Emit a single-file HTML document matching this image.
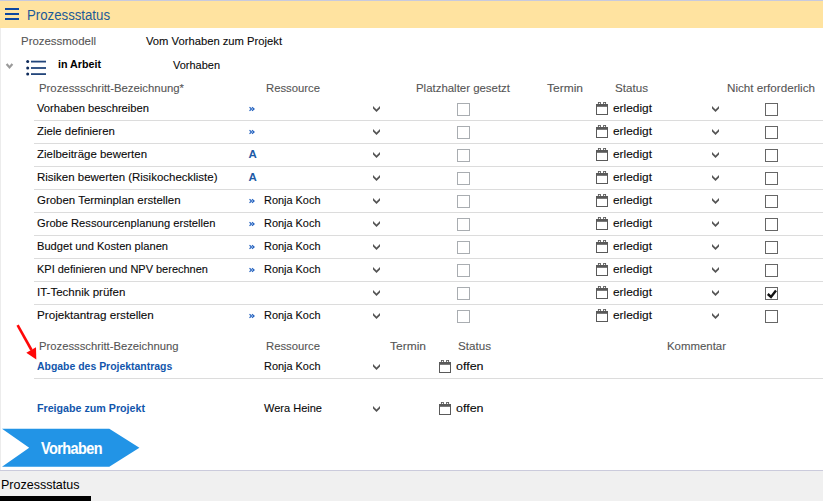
<!DOCTYPE html>
<html><head><meta charset="utf-8"><style>
*{margin:0;padding:0;box-sizing:border-box}
html,body{width:823px;height:501px;overflow:hidden;background:#fff;font-family:"Liberation Sans", sans-serif}
.t{position:absolute;white-space:nowrap;-webkit-text-stroke:0.1px currentColor}
.hl{position:absolute;left:34px;width:789px;height:1px;background:#dcdcdc}
.chev{position:absolute}
.cal{position:absolute}
.cb1{position:absolute;width:13px;height:13px;border:1px solid #a9adb1;background:#fff}
.cb2{position:absolute;width:13px;height:13px;border:1px solid #666;background:#fff}
.dq{position:absolute;font-size:11px;line-height:8px;font-weight:700;color:#1d5aa6}
</style></head><body>
<svg width="0" height="0" style="position:absolute"><defs>
<g id="calicon"><rect x="0.5" y="2.5" width="11" height="10" fill="none" stroke="#5a5a5a" stroke-width="1"/><rect x="0" y="2" width="12" height="2.8" fill="#5a5a5a"/><rect x="2.4" y="0.4" width="2" height="2.2" fill="none" stroke="#5a5a5a" stroke-width="0.9"/><rect x="7.6" y="0.4" width="2" height="2.2" fill="none" stroke="#5a5a5a" stroke-width="0.9"/></g>
</defs></svg>
<div style="position:absolute;left:0;top:0;width:823px;height:1px;background:#c8cade"></div>
<div style="position:absolute;left:0;top:1px;width:823px;height:27px;background:#ffe3a0"></div>
<div style="position:absolute;left:0;top:28px;width:1px;height:442px;background:#ececec"></div>
<div style="position:absolute;left:5px;top:8px;width:14px;height:2px;background:#0d47a1"></div>
<div style="position:absolute;left:5px;top:13px;width:14px;height:2px;background:#0d47a1"></div>
<div style="position:absolute;left:5px;top:18px;width:14px;height:2px;background:#0d47a1"></div>
<svg style="position:absolute;left:0px;top:54px" width="50" height="26">
<path d="M6.6 10 L9.5 13.4 L12.4 10" fill="none" stroke="#9a9a9a" stroke-width="2.2"/>
<circle cx="27.7" cy="7.6" r="1.5" fill="#0e2a5a"/><circle cx="27.7" cy="14" r="1.5" fill="#0e2a5a"/><circle cx="27.7" cy="20.1" r="1.5" fill="#0e2a5a"/>
<rect x="31" y="6.7" width="15" height="1.8" fill="#22457a"/><rect x="31" y="13.1" width="15" height="1.8" fill="#22457a"/><rect x="31" y="19.2" width="15" height="1.8" fill="#22457a"/>
</svg>
<svg style="position:absolute;left:249px;top:106px" width="6" height="6"><path d="M0.5 1.2 L2.6 3 L0.5 4.8 M3 1.2 L5.1 3 L3 4.8" fill="none" stroke="#2563c0" stroke-width="1.15"/></svg><svg class="chev" style="left:372px;top:105px" width="9" height="8"><path d="M1 1 L1 3.5 L4.5 7 L8 3.5 L8 1 L4.5 4.5 Z" fill="#555"/></svg><svg class="chev" style="left:711px;top:105px" width="9" height="8"><path d="M1 1 L1 3.5 L4.5 7 L8 3.5 L8 1 L4.5 4.5 Z" fill="#555"/></svg><div class="cb1" style="left:457px;top:103px"></div><div class="cb2" style="left:765px;top:103px"></div><svg class="cal" style="left:596px;top:102px" width="12" height="13"><rect x="0.5" y="2.5" width="11" height="10" fill="none" stroke="#5a5a5a" stroke-width="1"/><rect x="0" y="2" width="12" height="2.8" fill="#5a5a5a"/><rect x="2.4" y="0.4" width="2" height="2.2" fill="none" stroke="#5a5a5a" stroke-width="0.9"/><rect x="7.6" y="0.4" width="2" height="2.2" fill="none" stroke="#5a5a5a" stroke-width="0.9"/></svg><div class="hl" style="top:120px"></div><svg style="position:absolute;left:249px;top:129px" width="6" height="6"><path d="M0.5 1.2 L2.6 3 L0.5 4.8 M3 1.2 L5.1 3 L3 4.8" fill="none" stroke="#2563c0" stroke-width="1.15"/></svg><svg class="chev" style="left:372px;top:128px" width="9" height="8"><path d="M1 1 L1 3.5 L4.5 7 L8 3.5 L8 1 L4.5 4.5 Z" fill="#555"/></svg><svg class="chev" style="left:711px;top:128px" width="9" height="8"><path d="M1 1 L1 3.5 L4.5 7 L8 3.5 L8 1 L4.5 4.5 Z" fill="#555"/></svg><div class="cb1" style="left:457px;top:126px"></div><div class="cb2" style="left:765px;top:126px"></div><svg class="cal" style="left:596px;top:125px" width="12" height="13"><rect x="0.5" y="2.5" width="11" height="10" fill="none" stroke="#5a5a5a" stroke-width="1"/><rect x="0" y="2" width="12" height="2.8" fill="#5a5a5a"/><rect x="2.4" y="0.4" width="2" height="2.2" fill="none" stroke="#5a5a5a" stroke-width="0.9"/><rect x="7.6" y="0.4" width="2" height="2.2" fill="none" stroke="#5a5a5a" stroke-width="0.9"/></svg><div class="hl" style="top:143px"></div><svg class="chev" style="left:372px;top:151px" width="9" height="8"><path d="M1 1 L1 3.5 L4.5 7 L8 3.5 L8 1 L4.5 4.5 Z" fill="#555"/></svg><svg class="chev" style="left:711px;top:151px" width="9" height="8"><path d="M1 1 L1 3.5 L4.5 7 L8 3.5 L8 1 L4.5 4.5 Z" fill="#555"/></svg><div class="cb1" style="left:457px;top:149px"></div><div class="cb2" style="left:765px;top:149px"></div><svg class="cal" style="left:596px;top:148px" width="12" height="13"><rect x="0.5" y="2.5" width="11" height="10" fill="none" stroke="#5a5a5a" stroke-width="1"/><rect x="0" y="2" width="12" height="2.8" fill="#5a5a5a"/><rect x="2.4" y="0.4" width="2" height="2.2" fill="none" stroke="#5a5a5a" stroke-width="0.9"/><rect x="7.6" y="0.4" width="2" height="2.2" fill="none" stroke="#5a5a5a" stroke-width="0.9"/></svg><div class="hl" style="top:166px"></div><svg class="chev" style="left:372px;top:174px" width="9" height="8"><path d="M1 1 L1 3.5 L4.5 7 L8 3.5 L8 1 L4.5 4.5 Z" fill="#555"/></svg><svg class="chev" style="left:711px;top:174px" width="9" height="8"><path d="M1 1 L1 3.5 L4.5 7 L8 3.5 L8 1 L4.5 4.5 Z" fill="#555"/></svg><div class="cb1" style="left:457px;top:172px"></div><div class="cb2" style="left:765px;top:172px"></div><svg class="cal" style="left:596px;top:171px" width="12" height="13"><rect x="0.5" y="2.5" width="11" height="10" fill="none" stroke="#5a5a5a" stroke-width="1"/><rect x="0" y="2" width="12" height="2.8" fill="#5a5a5a"/><rect x="2.4" y="0.4" width="2" height="2.2" fill="none" stroke="#5a5a5a" stroke-width="0.9"/><rect x="7.6" y="0.4" width="2" height="2.2" fill="none" stroke="#5a5a5a" stroke-width="0.9"/></svg><div class="hl" style="top:189px"></div><svg style="position:absolute;left:249px;top:198px" width="6" height="6"><path d="M0.5 1.2 L2.6 3 L0.5 4.8 M3 1.2 L5.1 3 L3 4.8" fill="none" stroke="#2563c0" stroke-width="1.15"/></svg><svg class="chev" style="left:372px;top:197px" width="9" height="8"><path d="M1 1 L1 3.5 L4.5 7 L8 3.5 L8 1 L4.5 4.5 Z" fill="#555"/></svg><svg class="chev" style="left:711px;top:197px" width="9" height="8"><path d="M1 1 L1 3.5 L4.5 7 L8 3.5 L8 1 L4.5 4.5 Z" fill="#555"/></svg><div class="cb1" style="left:457px;top:195px"></div><div class="cb2" style="left:765px;top:195px"></div><svg class="cal" style="left:596px;top:194px" width="12" height="13"><rect x="0.5" y="2.5" width="11" height="10" fill="none" stroke="#5a5a5a" stroke-width="1"/><rect x="0" y="2" width="12" height="2.8" fill="#5a5a5a"/><rect x="2.4" y="0.4" width="2" height="2.2" fill="none" stroke="#5a5a5a" stroke-width="0.9"/><rect x="7.6" y="0.4" width="2" height="2.2" fill="none" stroke="#5a5a5a" stroke-width="0.9"/></svg><div class="hl" style="top:212px"></div><svg style="position:absolute;left:249px;top:221px" width="6" height="6"><path d="M0.5 1.2 L2.6 3 L0.5 4.8 M3 1.2 L5.1 3 L3 4.8" fill="none" stroke="#2563c0" stroke-width="1.15"/></svg><svg class="chev" style="left:372px;top:220px" width="9" height="8"><path d="M1 1 L1 3.5 L4.5 7 L8 3.5 L8 1 L4.5 4.5 Z" fill="#555"/></svg><svg class="chev" style="left:711px;top:220px" width="9" height="8"><path d="M1 1 L1 3.5 L4.5 7 L8 3.5 L8 1 L4.5 4.5 Z" fill="#555"/></svg><div class="cb1" style="left:457px;top:218px"></div><div class="cb2" style="left:765px;top:218px"></div><svg class="cal" style="left:596px;top:217px" width="12" height="13"><rect x="0.5" y="2.5" width="11" height="10" fill="none" stroke="#5a5a5a" stroke-width="1"/><rect x="0" y="2" width="12" height="2.8" fill="#5a5a5a"/><rect x="2.4" y="0.4" width="2" height="2.2" fill="none" stroke="#5a5a5a" stroke-width="0.9"/><rect x="7.6" y="0.4" width="2" height="2.2" fill="none" stroke="#5a5a5a" stroke-width="0.9"/></svg><div class="hl" style="top:235px"></div><svg style="position:absolute;left:249px;top:244px" width="6" height="6"><path d="M0.5 1.2 L2.6 3 L0.5 4.8 M3 1.2 L5.1 3 L3 4.8" fill="none" stroke="#2563c0" stroke-width="1.15"/></svg><svg class="chev" style="left:372px;top:243px" width="9" height="8"><path d="M1 1 L1 3.5 L4.5 7 L8 3.5 L8 1 L4.5 4.5 Z" fill="#555"/></svg><svg class="chev" style="left:711px;top:243px" width="9" height="8"><path d="M1 1 L1 3.5 L4.5 7 L8 3.5 L8 1 L4.5 4.5 Z" fill="#555"/></svg><div class="cb1" style="left:457px;top:241px"></div><div class="cb2" style="left:765px;top:241px"></div><svg class="cal" style="left:596px;top:240px" width="12" height="13"><rect x="0.5" y="2.5" width="11" height="10" fill="none" stroke="#5a5a5a" stroke-width="1"/><rect x="0" y="2" width="12" height="2.8" fill="#5a5a5a"/><rect x="2.4" y="0.4" width="2" height="2.2" fill="none" stroke="#5a5a5a" stroke-width="0.9"/><rect x="7.6" y="0.4" width="2" height="2.2" fill="none" stroke="#5a5a5a" stroke-width="0.9"/></svg><div class="hl" style="top:258px"></div><svg style="position:absolute;left:249px;top:267px" width="6" height="6"><path d="M0.5 1.2 L2.6 3 L0.5 4.8 M3 1.2 L5.1 3 L3 4.8" fill="none" stroke="#2563c0" stroke-width="1.15"/></svg><svg class="chev" style="left:372px;top:266px" width="9" height="8"><path d="M1 1 L1 3.5 L4.5 7 L8 3.5 L8 1 L4.5 4.5 Z" fill="#555"/></svg><svg class="chev" style="left:711px;top:266px" width="9" height="8"><path d="M1 1 L1 3.5 L4.5 7 L8 3.5 L8 1 L4.5 4.5 Z" fill="#555"/></svg><div class="cb1" style="left:457px;top:264px"></div><div class="cb2" style="left:765px;top:264px"></div><svg class="cal" style="left:596px;top:263px" width="12" height="13"><rect x="0.5" y="2.5" width="11" height="10" fill="none" stroke="#5a5a5a" stroke-width="1"/><rect x="0" y="2" width="12" height="2.8" fill="#5a5a5a"/><rect x="2.4" y="0.4" width="2" height="2.2" fill="none" stroke="#5a5a5a" stroke-width="0.9"/><rect x="7.6" y="0.4" width="2" height="2.2" fill="none" stroke="#5a5a5a" stroke-width="0.9"/></svg><div class="hl" style="top:281px"></div><svg class="chev" style="left:372px;top:289px" width="9" height="8"><path d="M1 1 L1 3.5 L4.5 7 L8 3.5 L8 1 L4.5 4.5 Z" fill="#555"/></svg><svg class="chev" style="left:711px;top:289px" width="9" height="8"><path d="M1 1 L1 3.5 L4.5 7 L8 3.5 L8 1 L4.5 4.5 Z" fill="#555"/></svg><div class="cb1" style="left:457px;top:287px"></div><div class="cb2" style="left:765px;top:287px"></div><svg style="position:absolute;left:765px;top:287px" width="13" height="13"><path d="M2.8 7 L6 10 L11 3.5" fill="none" stroke="#111" stroke-width="2.4"/></svg><svg class="cal" style="left:596px;top:286px" width="12" height="13"><rect x="0.5" y="2.5" width="11" height="10" fill="none" stroke="#5a5a5a" stroke-width="1"/><rect x="0" y="2" width="12" height="2.8" fill="#5a5a5a"/><rect x="2.4" y="0.4" width="2" height="2.2" fill="none" stroke="#5a5a5a" stroke-width="0.9"/><rect x="7.6" y="0.4" width="2" height="2.2" fill="none" stroke="#5a5a5a" stroke-width="0.9"/></svg><div class="hl" style="top:304px"></div><svg style="position:absolute;left:249px;top:313px" width="6" height="6"><path d="M0.5 1.2 L2.6 3 L0.5 4.8 M3 1.2 L5.1 3 L3 4.8" fill="none" stroke="#2563c0" stroke-width="1.15"/></svg><svg class="chev" style="left:372px;top:312px" width="9" height="8"><path d="M1 1 L1 3.5 L4.5 7 L8 3.5 L8 1 L4.5 4.5 Z" fill="#555"/></svg><svg class="chev" style="left:711px;top:312px" width="9" height="8"><path d="M1 1 L1 3.5 L4.5 7 L8 3.5 L8 1 L4.5 4.5 Z" fill="#555"/></svg><div class="cb1" style="left:457px;top:310px"></div><div class="cb2" style="left:765px;top:310px"></div><svg class="cal" style="left:596px;top:309px" width="12" height="13"><rect x="0.5" y="2.5" width="11" height="10" fill="none" stroke="#5a5a5a" stroke-width="1"/><rect x="0" y="2" width="12" height="2.8" fill="#5a5a5a"/><rect x="2.4" y="0.4" width="2" height="2.2" fill="none" stroke="#5a5a5a" stroke-width="0.9"/><rect x="7.6" y="0.4" width="2" height="2.2" fill="none" stroke="#5a5a5a" stroke-width="0.9"/></svg><svg class="chev" style="left:372px;top:363px" width="9" height="8"><path d="M1 1 L1 3.5 L4.5 7 L8 3.5 L8 1 L4.5 4.5 Z" fill="#555"/></svg><svg class="cal" style="left:439px;top:360px" width="12" height="13"><rect x="0.5" y="2.5" width="11" height="10" fill="none" stroke="#5a5a5a" stroke-width="1"/><rect x="0" y="2" width="12" height="2.8" fill="#5a5a5a"/><rect x="2.4" y="0.4" width="2" height="2.2" fill="none" stroke="#5a5a5a" stroke-width="0.9"/><rect x="7.6" y="0.4" width="2" height="2.2" fill="none" stroke="#5a5a5a" stroke-width="0.9"/></svg><div class="hl" style="top:378px"></div><svg class="chev" style="left:372px;top:405px" width="9" height="8"><path d="M1 1 L1 3.5 L4.5 7 L8 3.5 L8 1 L4.5 4.5 Z" fill="#555"/></svg><svg class="cal" style="left:439px;top:402px" width="12" height="13"><rect x="0.5" y="2.5" width="11" height="10" fill="none" stroke="#5a5a5a" stroke-width="1"/><rect x="0" y="2" width="12" height="2.8" fill="#5a5a5a"/><rect x="2.4" y="0.4" width="2" height="2.2" fill="none" stroke="#5a5a5a" stroke-width="0.9"/><rect x="7.6" y="0.4" width="2" height="2.2" fill="none" stroke="#5a5a5a" stroke-width="0.9"/></svg>
<svg style="position:absolute;left:0;top:0" width="823" height="501">
<path d="M2 428.7 L109.3 428.7 L139.4 447.7 L109.3 466.8 L2 466.8 L29.2 447.7 Z" fill="#2294e6"/>
<line x1="17.6" y1="325.2" x2="31.5" y2="350" stroke="#ff0808" stroke-width="2.6"/>
<path d="M26.3 352.8 L36.3 359.6 L36 347.3 Z" fill="#ff0808"/>
</svg>
<div class="t" style="left:41px;top:441px;font-size:16px;line-height:16px;font-weight:700;color:#fff;letter-spacing:-0.6px;transform:scaleX(0.9);transform-origin:0 0">Vorhaben</div>
<div style="position:absolute;left:0;top:470px;width:823px;height:31px;background:#f0f0f0;border-top:1px solid #cbcbdc"></div>

<div style="position:absolute;left:0;top:496px;width:91px;height:5px;background:#000"></div>
<div class="t" style="left:26.50px;top:8.00px;font-size:14px;line-height:14px;font-weight:400;color:#1b5a98;letter-spacing:0.000px;-webkit-text-stroke:0;transform:scaleX(0.9439);transform-origin:0 0">Prozessstatus</div><div class="t" style="left:20.50px;top:36.00px;font-size:11.5px;line-height:11.5px;font-weight:400;color:#555;letter-spacing:0.000px;transform:scaleX(0.9944);transform-origin:0 0">Prozessmodell</div><div class="t" style="left:145.50px;top:36.00px;font-size:11.5px;line-height:11.5px;font-weight:400;color:#0a0a0a;letter-spacing:0.000px;transform:scaleX(0.9759);transform-origin:0 0">Vom Vorhaben zum Projekt</div><div class="t" style="left:57.50px;top:59.00px;font-size:11.5px;line-height:11.5px;font-weight:700;color:#000;letter-spacing:0.000px;-webkit-text-stroke:0;transform:scaleX(0.9304);transform-origin:0 0">in Arbeit</div><div class="t" style="left:172.50px;top:60.00px;font-size:11.5px;line-height:11.5px;font-weight:400;color:#0a0a0a;letter-spacing:0.000px;transform:scaleX(0.9543);transform-origin:0 0">Vorhaben</div><div class="t" style="left:38.50px;top:83.00px;font-size:11.5px;line-height:11.5px;font-weight:400;color:#555;letter-spacing:0.000px;transform:scaleX(0.9863);transform-origin:0 0">Prozessschritt-Bezeichnung*</div><div class="t" style="left:265.50px;top:83.00px;font-size:11.5px;line-height:11.5px;font-weight:400;color:#555;letter-spacing:0.000px;transform:scaleX(0.9824);transform-origin:0 0">Ressource</div><div class="t" style="left:416.00px;top:83.00px;font-size:11.5px;line-height:11.5px;font-weight:400;color:#555;letter-spacing:0.000px;transform:scaleX(0.9936);transform-origin:0 0">Platzhalter gesetzt</div><div class="t" style="left:547.00px;top:83.00px;font-size:11.5px;line-height:11.5px;font-weight:400;color:#555;letter-spacing:0.000px;transform:scaleX(1.0430);transform-origin:0 0">Termin</div><div class="t" style="left:615.00px;top:83.00px;font-size:11.5px;line-height:11.5px;font-weight:400;color:#555;letter-spacing:0.000px;transform:scaleX(1.0120);transform-origin:0 0">Status</div><div class="t" style="left:727.00px;top:83.00px;font-size:11.5px;line-height:11.5px;font-weight:400;color:#555;letter-spacing:0.000px;transform:scaleX(1.0124);transform-origin:0 0">Nicht erforderlich</div><div class="t" style="left:36.50px;top:103.00px;font-size:11.5px;line-height:11.5px;font-weight:400;color:#0a0a0a;letter-spacing:0.000px;transform:scaleX(0.9731);transform-origin:0 0">Vorhaben beschreiben</div><div class="t" style="left:612.50px;top:103.00px;font-size:11.5px;line-height:11.5px;font-weight:400;color:#0a0a0a;letter-spacing:0.000px;transform:scaleX(1.0340);transform-origin:0 0">erledigt</div><div class="t" style="left:36.50px;top:126.00px;font-size:11.5px;line-height:11.5px;font-weight:400;color:#0a0a0a;letter-spacing:0.000px;transform:scaleX(0.9893);transform-origin:0 0">Ziele definieren</div><div class="t" style="left:612.50px;top:126.00px;font-size:11.5px;line-height:11.5px;font-weight:400;color:#0a0a0a;letter-spacing:0.000px;transform:scaleX(1.0340);transform-origin:0 0">erledigt</div><div class="t" style="left:36.50px;top:149.00px;font-size:11.5px;line-height:11.5px;font-weight:400;color:#0a0a0a;letter-spacing:0.000px;transform:scaleX(0.9946);transform-origin:0 0">Zielbeiträge bewerten</div><div class="t" style="left:612.50px;top:149.00px;font-size:11.5px;line-height:11.5px;font-weight:400;color:#0a0a0a;letter-spacing:0.000px;transform:scaleX(1.0340);transform-origin:0 0">erledigt</div><div class="t" style="left:248.50px;top:149.00px;font-size:11.5px;line-height:11.5px;font-weight:700;color:#1d5aa6;letter-spacing:0.000px;-webkit-text-stroke:0">A</div><div class="t" style="left:36.50px;top:172.00px;font-size:11.5px;line-height:11.5px;font-weight:400;color:#0a0a0a;letter-spacing:0.000px;transform:scaleX(0.9979);transform-origin:0 0">Risiken bewerten (Risikocheckliste)</div><div class="t" style="left:612.50px;top:172.00px;font-size:11.5px;line-height:11.5px;font-weight:400;color:#0a0a0a;letter-spacing:0.000px;transform:scaleX(1.0340);transform-origin:0 0">erledigt</div><div class="t" style="left:248.50px;top:172.00px;font-size:11.5px;line-height:11.5px;font-weight:700;color:#1d5aa6;letter-spacing:0.000px;-webkit-text-stroke:0">A</div><div class="t" style="left:36.50px;top:195.00px;font-size:11.5px;line-height:11.5px;font-weight:400;color:#0a0a0a;letter-spacing:0.000px;transform:scaleX(0.9954);transform-origin:0 0">Groben Terminplan erstellen</div><div class="t" style="left:264.00px;top:195.00px;font-size:11.5px;line-height:11.5px;font-weight:400;color:#0a0a0a;letter-spacing:0.000px;transform:scaleX(0.9501);transform-origin:0 0">Ronja Koch</div><div class="t" style="left:612.50px;top:195.00px;font-size:11.5px;line-height:11.5px;font-weight:400;color:#0a0a0a;letter-spacing:0.000px;transform:scaleX(1.0340);transform-origin:0 0">erledigt</div><div class="t" style="left:36.50px;top:218.00px;font-size:11.5px;line-height:11.5px;font-weight:400;color:#0a0a0a;letter-spacing:0.000px;transform:scaleX(0.9689);transform-origin:0 0">Grobe Ressourcenplanung erstellen</div><div class="t" style="left:264.00px;top:218.00px;font-size:11.5px;line-height:11.5px;font-weight:400;color:#0a0a0a;letter-spacing:0.000px;transform:scaleX(0.9501);transform-origin:0 0">Ronja Koch</div><div class="t" style="left:612.50px;top:218.00px;font-size:11.5px;line-height:11.5px;font-weight:400;color:#0a0a0a;letter-spacing:0.000px;transform:scaleX(1.0340);transform-origin:0 0">erledigt</div><div class="t" style="left:36.50px;top:241.00px;font-size:11.5px;line-height:11.5px;font-weight:400;color:#0a0a0a;letter-spacing:0.000px;transform:scaleX(0.9663);transform-origin:0 0">Budget und Kosten planen</div><div class="t" style="left:264.00px;top:241.00px;font-size:11.5px;line-height:11.5px;font-weight:400;color:#0a0a0a;letter-spacing:0.000px;transform:scaleX(0.9501);transform-origin:0 0">Ronja Koch</div><div class="t" style="left:612.50px;top:241.00px;font-size:11.5px;line-height:11.5px;font-weight:400;color:#0a0a0a;letter-spacing:0.000px;transform:scaleX(1.0340);transform-origin:0 0">erledigt</div><div class="t" style="left:36.50px;top:264.00px;font-size:11.5px;line-height:11.5px;font-weight:400;color:#0a0a0a;letter-spacing:0.000px;transform:scaleX(0.9547);transform-origin:0 0">KPI definieren und NPV berechnen</div><div class="t" style="left:264.00px;top:264.00px;font-size:11.5px;line-height:11.5px;font-weight:400;color:#0a0a0a;letter-spacing:0.000px;transform:scaleX(0.9501);transform-origin:0 0">Ronja Koch</div><div class="t" style="left:612.50px;top:264.00px;font-size:11.5px;line-height:11.5px;font-weight:400;color:#0a0a0a;letter-spacing:0.000px;transform:scaleX(1.0340);transform-origin:0 0">erledigt</div><div class="t" style="left:36.50px;top:287.00px;font-size:11.5px;line-height:11.5px;font-weight:400;color:#0a0a0a;letter-spacing:0.000px;transform:scaleX(1.0009);transform-origin:0 0">IT-Technik prüfen</div><div class="t" style="left:612.50px;top:287.00px;font-size:11.5px;line-height:11.5px;font-weight:400;color:#0a0a0a;letter-spacing:0.000px;transform:scaleX(1.0340);transform-origin:0 0">erledigt</div><div class="t" style="left:36.50px;top:310.00px;font-size:11.5px;line-height:11.5px;font-weight:400;color:#0a0a0a;letter-spacing:0.000px;transform:scaleX(1.0151);transform-origin:0 0">Projektantrag erstellen</div><div class="t" style="left:264.00px;top:310.00px;font-size:11.5px;line-height:11.5px;font-weight:400;color:#0a0a0a;letter-spacing:0.000px;transform:scaleX(0.9501);transform-origin:0 0">Ronja Koch</div><div class="t" style="left:612.50px;top:310.00px;font-size:11.5px;line-height:11.5px;font-weight:400;color:#0a0a0a;letter-spacing:0.000px;transform:scaleX(1.0340);transform-origin:0 0">erledigt</div><div class="t" style="left:39.00px;top:341.00px;font-size:11.5px;line-height:11.5px;font-weight:400;color:#555;letter-spacing:0.000px;transform:scaleX(0.9786);transform-origin:0 0">Prozessschritt-Bezeichnung</div><div class="t" style="left:266.00px;top:341.00px;font-size:11.5px;line-height:11.5px;font-weight:400;color:#555;letter-spacing:0.000px;transform:scaleX(0.9824);transform-origin:0 0">Ressource</div><div class="t" style="left:390.00px;top:341.00px;font-size:11.5px;line-height:11.5px;font-weight:400;color:#555;letter-spacing:0.000px;transform:scaleX(1.0430);transform-origin:0 0">Termin</div><div class="t" style="left:457.50px;top:341.00px;font-size:11.5px;line-height:11.5px;font-weight:400;color:#555;letter-spacing:0.000px;transform:scaleX(1.0120);transform-origin:0 0">Status</div><div class="t" style="left:667.00px;top:341.00px;font-size:11.5px;line-height:11.5px;font-weight:400;color:#555;letter-spacing:0.000px;transform:scaleX(0.9926);transform-origin:0 0">Kommentar</div><div class="t" style="left:36.80px;top:361.00px;font-size:11.5px;line-height:11.5px;font-weight:700;color:#1256ac;letter-spacing:0.000px;-webkit-text-stroke:0;transform:scaleX(0.9086);transform-origin:0 0">Abgabe des Projektantrags</div><div class="t" style="left:264.00px;top:361.00px;font-size:11.5px;line-height:11.5px;font-weight:400;color:#0a0a0a;letter-spacing:0.000px;transform:scaleX(0.9501);transform-origin:0 0">Ronja Koch</div><div class="t" style="left:455.50px;top:361.00px;font-size:11.5px;line-height:11.5px;font-weight:400;color:#0a0a0a;letter-spacing:0.000px;transform:scaleX(1.0837);transform-origin:0 0">offen</div><div class="t" style="left:1.00px;top:478.00px;font-size:13px;line-height:13px;font-weight:400;color:#000;letter-spacing:0.000px;-webkit-text-stroke:0;transform:scaleX(0.9613);transform-origin:0 0">Prozessstatus</div><div class="t" style="left:36.80px;top:403.00px;font-size:11.5px;line-height:11.5px;font-weight:700;color:#1256ac;letter-spacing:0.000px;-webkit-text-stroke:0;transform:scaleX(0.9285);transform-origin:0 0">Freigabe zum Projekt</div><div class="t" style="left:264.00px;top:403.00px;font-size:11.5px;line-height:11.5px;font-weight:400;color:#0a0a0a;letter-spacing:0.000px;transform:scaleX(0.9584);transform-origin:0 0">Wera Heine</div><div class="t" style="left:455.50px;top:403.00px;font-size:11.5px;line-height:11.5px;font-weight:400;color:#0a0a0a;letter-spacing:0.000px;transform:scaleX(1.0837);transform-origin:0 0">offen</div>
</body></html>
